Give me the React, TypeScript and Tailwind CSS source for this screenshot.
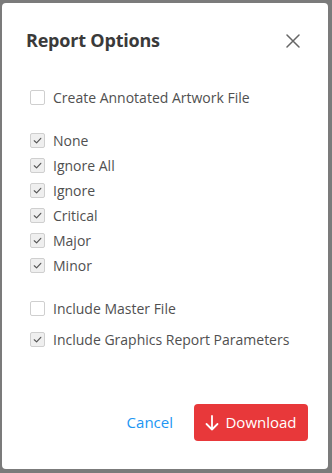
import React from "react";

function Box({ checked }: { checked: boolean }) {
  return (
    <span
      className={
        "flex h-[15px] w-[15px] shrink-0 items-center justify-center rounded-[2px] border " +
        (checked ? "border-[#cfcfcf] bg-[#efefef]" : "border-[#cfcfcf] bg-white")
      }
    >
      {checked && (
        <svg width="11" height="11" viewBox="0 0 12 12" fill="none">
          <path d="M2.5 6.3 L5 8.6 L9.6 3.6" stroke="#555" strokeWidth="1.3" strokeLinecap="round" strokeLinejoin="round" />
        </svg>
      )}
    </span>
  );
}

function Row({ label, checked }: { label: string; checked: boolean }) {
  return (
    <div className="flex items-center gap-[8px] h-[25px]">
      <Box checked={checked} />
      <span className="text-[14px] text-[#505050]">{label}</span>
    </div>
  );
}

export default function App() {
  return (
    <div
      className="h-[473px] w-[332px] bg-[#7b7b7b] pl-[2px] pt-[3px]"
      style={{ fontFamily: '"Open Sans", "Noto Sans", sans-serif' }}
    >
      <div className="flex h-[466px] w-[326px] flex-col rounded-[4px] bg-white">
        <div className="flex items-center justify-between pl-[24px] pr-[28px] pt-[24px]">
          <span className="text-[18px] font-bold text-[#3a3a3a] tracking-[-0.2px]">Report Options</span>
          <svg width="14" height="14" viewBox="0 0 14 14" fill="none">
            <path d="M1 1 L13 13 M13 1 L1 13" stroke="#666" strokeWidth="1.5" strokeLinecap="round" />
          </svg>
        </div>
        <div className="flex flex-col pl-[28px] pt-[31px]">
          <Row label="Create Annotated Artwork File" checked={false} />
          <div className="mt-[18px] flex flex-col">
            <Row label="None" checked />
            <Row label="Ignore All" checked />
            <Row label="Ignore" checked />
            <Row label="Critical" checked />
            <Row label="Major" checked />
            <Row label="Minor" checked />
          </div>
          <div className="mt-[18px] flex flex-col gap-[6px]">
            <Row label="Include Master File" checked={false} />
            <Row label="Include Graphics Report Parameters" checked />
          </div>
        </div>
        <div className="mt-auto mb-[28px] flex items-center justify-end gap-[21px] pr-[20px]">
          <span className="text-[15px] text-[#2196f3]">Cancel</span>
          <button className="flex h-[37px] w-[114px] items-center justify-center gap-[6px] rounded-[4px] bg-[#e8383a] text-[15px] text-white">
            <svg width="14" height="16" viewBox="0 0 14 16" fill="none">
              <path d="M7 1 V14.5 M1.5 9 L7 14.5 L12.5 9" stroke="white" strokeWidth="1.8" strokeLinecap="round" strokeLinejoin="round" />
            </svg>
            Download
          </button>
        </div>
      </div>
    </div>
  );
}
